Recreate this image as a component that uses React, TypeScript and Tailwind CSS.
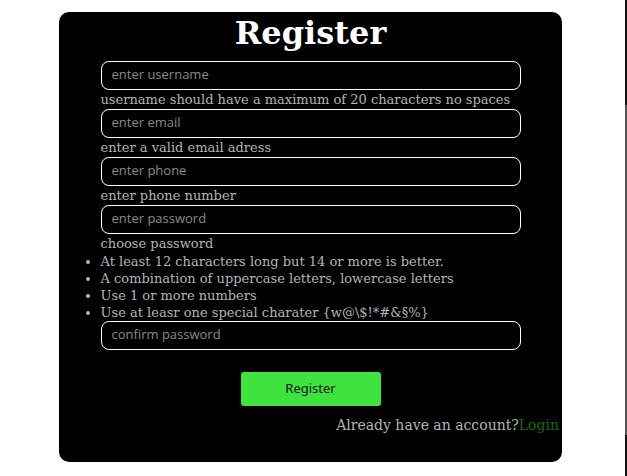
export default function App() {
  const fields = [
    { placeholder: 'enter username', hint: 'username should have a maximum of 20 characters no spaces' },
    { placeholder: 'enter email', hint: 'enter a valid email adress' },
    { placeholder: 'enter phone', hint: 'enter phone number' },
    { placeholder: 'enter password', hint: 'choose password' },
  ]
  const rules = [
    'At least 12 characters long but 14 or more is better.',
    'A combination of uppercase letters, lowercase letters',
    'Use 1 or more numbers',
    'Use at leasr one special charater {w@\\$!*#&§%}',
  ]
  const serif = "font-['DejaVu_Serif',serif]"
  const inputCls =
    "block w-[420px] h-[29px] rounded-lg border border-white bg-black px-[10px] pb-[3px] text-[13px] text-white placeholder:text-[#8a8a8a] font-['Open_Sans',sans-serif] outline-none"

  return (
    <div className="relative w-[627px] h-[476px] bg-white">
      <div className="pl-[59px] pt-3">
        <div className="w-[503px] h-[450px] rounded-[10px] bg-black flex flex-col items-center">
          <h1 className={`${serif} text-[32px] font-bold text-white leading-[38px] mt-[2px]`}>Register</h1>
          <div className="w-[420px] mt-[9px]">
            {fields.map(f => (
              <div key={f.placeholder}>
                <input className={inputCls} placeholder={f.placeholder} />
                <p className={`${serif} text-[13px] leading-[19px] text-[#b5b5b5]`}>{f.hint}</p>
              </div>
            ))}
            <ul className={`${serif} text-[13px] leading-[17px] text-[#b5b5b5] list-disc ml-[-9px] pl-[9px]`}>
              {rules.map(r => (
                <li key={r}>{r}</li>
              ))}
            </ul>
            <input className={inputCls} placeholder="confirm password" />
          </div>
          <button className="mt-[22px] w-[140px] h-[34px] rounded-[3px] bg-[#3ee33e] text-[13px] text-[#111] font-['Noto_Sans',sans-serif]">
            Register
          </button>
          <p className={`${serif} self-end mr-[3px] mt-[9px] text-[14px] leading-[20px] text-[#b5b5b5]`}>
            Already have an account?<span className="text-[#0f6d0f]">Login</span>
          </p>
        </div>
      </div>
      <div className="absolute right-0 top-0 w-[2px] h-full bg-[#111]">
        <div className="mt-[105px] h-[330px] bg-[#555]" />
      </div>
    </div>
  )
}
